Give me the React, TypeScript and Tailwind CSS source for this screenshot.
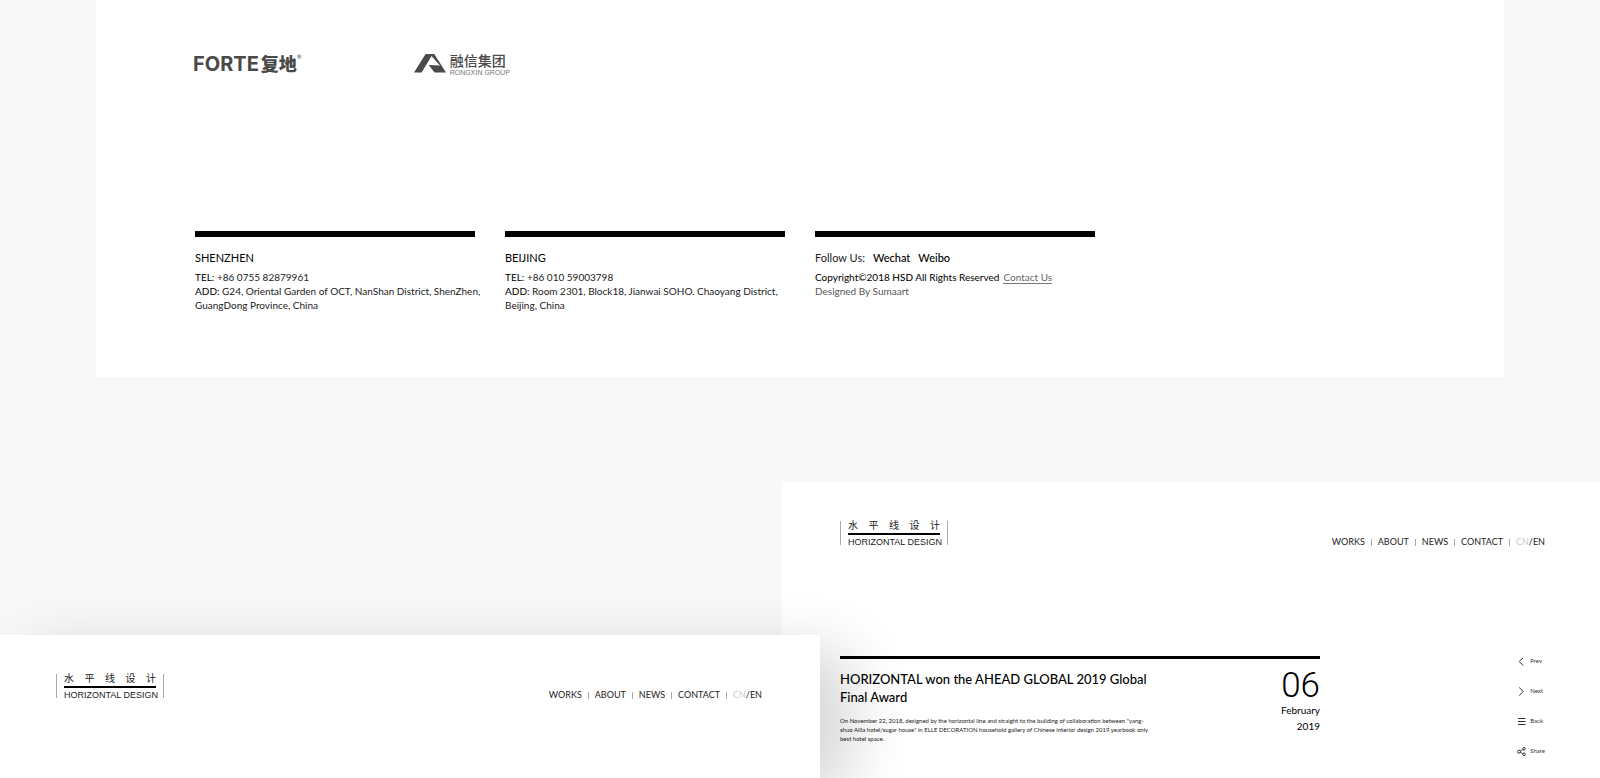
import { ReactNode } from 'react';

const navItems = ['WORKS', 'ABOUT', 'NEWS', 'CONTACT'];

function ForteLogo() {
  return (
    <a href="#forte" className="flex items-start text-[#4a4a4a]">
      <span className="font-[family-name:Inter,sans-serif] text-[20px] leading-5 font-bold">FORTE</span>
      <span className="ml-0.5 font-[family-name:'Noto_Sans_CJK_SC',sans-serif] text-[18px] leading-[18px] font-black">复地</span>
      <span className="text-[6px] leading-[6px]">®</span>
    </a>
  );
}

function RongxinLogo() {
  return (
    <a href="#rongxin" className="flex items-start gap-1 text-[#4a4a4a]">
      <svg width="32" height="19" viewBox="0 0 32 19" fill="currentColor" aria-hidden="true">
        <path d="M0 18.5 11.6 0h7.2L7.6 18.5Z" />
        <path d="M18 0h2.2L32 18.5H20.6L14.6 11l11.4.6L17 1.4Z" />
      </svg>
      <span className="flex flex-col gap-1">
        <span className="font-[family-name:'Noto_Sans_CJK_SC',sans-serif] text-sm leading-3 font-medium">融信集团</span>
        <span className="font-[family-name:'Liberation_Sans',sans-serif] text-[7px] leading-[6px] text-[#777]">RONGXIN GROUP</span>
      </span>
    </a>
  );
}

function BrandLogo() {
  return (
    <a href="#home" className="flex h-6 w-[108px] flex-col justify-between border-x border-[#aaa] px-[7px] text-[#222]">
      <span className="flex justify-between font-[family-name:'Noto_Sans_CJK_SC',sans-serif] text-[10px] leading-[8px]">
        {[...'水平线设计'].map((char) => (
          <span key={char}>{char}</span>
        ))}
      </span>
      <span className="h-0.5 bg-black" />
      <span className="text-center font-[family-name:'Liberation_Sans',sans-serif] text-[9px] leading-[6px] whitespace-nowrap">
        HORIZONTAL DESIGN
      </span>
    </a>
  );
}

function SiteHeader() {
  return (
    <header className="flex items-start justify-between pt-[39px]">
      <BrandLogo />
      <nav className="mt-[15px] flex items-center text-[9px] leading-3 text-[#222]">
        {navItems.map((item) => (
          <span key={item} className="flex items-center">
            <a href={`#${item.toLowerCase()}`}>{item}</a>
            <span className="mx-1.5 h-[7px] w-px bg-[#aaa]" />
          </span>
        ))}
        <a href="#cn" className="text-[#ccc]">CN</a>
        <a href="#en">/EN</a>
      </nav>
    </header>
  );
}

function FooterColumn({ title, children }: { title: ReactNode; children: ReactNode }) {
  return (
    <div className="w-[280px] border-t-[6px] border-black pt-[14px] text-[10px] leading-[14px] text-[#222]">
      <div className="mb-[5px] text-[11px] text-black">{title}</div>
      {children}
    </div>
  );
}

function SiteFooter() {
  return (
    <footer className="flex gap-[30px] whitespace-nowrap">
      <FooterColumn title="SHENZHEN">
        <p><span className="text-black">TEL:</span> +86 0755 82879961</p>
        <p><span className="text-black">ADD:</span> G24, Oriental Garden of OCT, NanShan District, ShenZhen,<br />GuangDong Province, China</p>
      </FooterColumn>
      <FooterColumn title="BEIJING">
        <p><span className="text-black">TEL:</span> +86 010 59003798</p>
        <p><span className="text-black">ADD:</span> Room 2301, Block18, Jianwai SOHO. Chaoyang District,<br />Beijing, China</p>
      </FooterColumn>
      <FooterColumn
        title={
          <span className="flex gap-2">
            <span className="text-[#222]">Follow Us:</span>
            <a href="#wechat" className="font-medium">Wechat</a>
            <a href="#weibo" className="font-medium">Weibo</a>
          </span>
        }
      >
        <p className="text-black">
          Copyright©2018 <span className="font-medium">HSD</span> All Rights Reserved
          <a href="#contact" className="ml-1 border-b border-[#777] text-[#666]">Contact Us</a>
        </p>
        <p className="text-[#555]">Designed By Sumaart</p>
      </FooterColumn>
    </footer>
  );
}

function ActionIcon({ path, children }: { path: string; children?: ReactNode }) {
  return (
    <svg width="9" height="9" viewBox="0 0 9 9" fill="none" stroke="currentColor" aria-hidden="true">
      <path d={path} />
      {children}
    </svg>
  );
}

const actions = [
  { label: 'Prev', icon: <ActionIcon path="M6.3.5 2.2 4.5l4.1 4" /> },
  { label: 'Next', icon: <ActionIcon path="m2.2.5 4.1 4-4.1 4" /> },
  { label: 'Back', icon: <ActionIcon path="M1 1.5h7.5M1 4.5h7.5M1 7.5h7.5" /> },
  {
    label: 'Share',
    icon: (
      <ActionIcon path="m3.4 4 2.2-1.4M3.4 5.4l2.2 1.3">
        <circle cx="2" cy="4.7" r="1.5" />
        <circle cx="7" cy="1.8" r="1.3" />
        <circle cx="7" cy="7.3" r="1.3" />
      </ActionIcon>
    ),
  },
];

function Article() {
  return (
    <div className="mt-[108px] flex items-start justify-between">
      <article className="flex w-[480px] justify-between border-t-[3px] border-black pt-[11px] text-black">
        <div className="whitespace-nowrap">
          <h1 className="text-[13px] leading-[18px] font-medium">
            HORIZONTAL won the AHEAD GLOBAL 2019 Global
            <br />
            Final Award
          </h1>
          <p className="mt-2.5 text-[6px] leading-[9px] text-[#222]">
            On November 22, 2018, designed by the horizontal line and straight to the building of collaboration between "yang-
            <br />
            shuo Alila hotel/sugar house" in ELLE DECORATION household gallery of Chinese interior design 2019 yearbook only
            <br />
            best hotel space.
          </p>
        </div>
        <time dateTime="2019-02-06" className="flex flex-col items-end text-[10px] leading-4">
          <span className="font-[family-name:Roboto,sans-serif] text-[35px] leading-8 font-light">06</span>
          <span>February</span>
          <span>2019</span>
        </time>
      </article>
      <div className="flex flex-col gap-5 text-[6px] leading-[10px] text-[#333]">
        {actions.map(({ label, icon }) => (
          <button key={label} type="button" className="flex h-[10px] items-center gap-1">
            {icon}
            {label}
          </button>
        ))}
      </div>
    </div>
  );
}

export default function App() {
  return (
    <div className="flex min-h-screen flex-col overflow-hidden bg-[#f8f8f8] font-[family-name:Lato,sans-serif]">
      <section className="mx-[6%] bg-white px-[97px] pt-[54px] pb-[65px]">
        <div className="flex h-5 items-start gap-[112px]">
          <ForteLogo />
          <RongxinLogo />
        </div>
        <div className="mt-[157px] pl-0.5">
          <SiteFooter />
        </div>
      </section>
      <div className="mt-[105px] flex grow">
        <section className="z-10 mt-[153px] w-[820px] shrink-0 bg-white pr-[58px] pl-14 shadow-[30px_15px_60px_rgba(0,0,0,0.16)]">
          <SiteHeader />
        </section>
        <section className="-ml-[38px] grow bg-white pr-[55px] pl-[58px]">
          <SiteHeader />
          <Article />
        </section>
      </div>
    </div>
  );
}
